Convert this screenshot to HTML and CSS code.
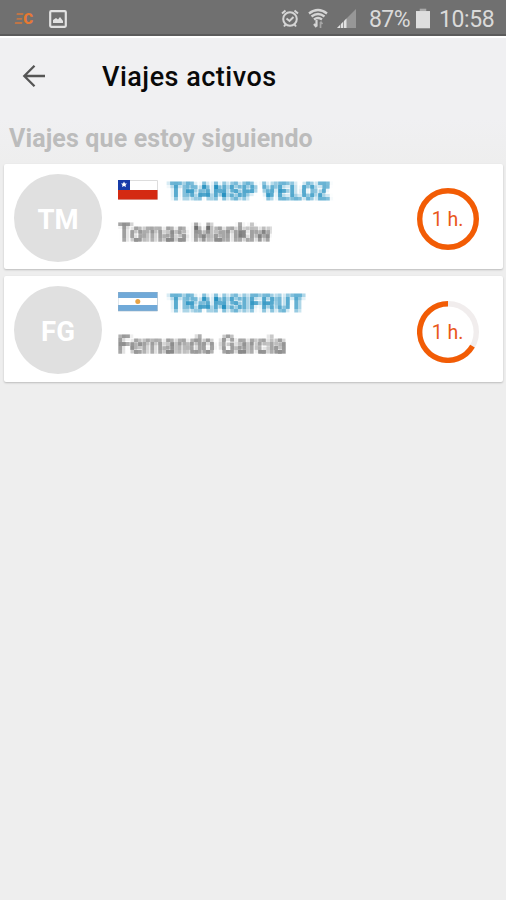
FILE: index.html
```html
<!DOCTYPE html>
<html lang="es">
<head>
<meta charset="utf-8">
<title>Viajes activos</title>
<link rel="stylesheet" href="styles.css">
</head>
<body>
<svg class="defs" width="0" height="0" aria-hidden="true">
  <filter id="mosaic" x="0" y="0" width="100%" height="100%" color-interpolation-filters="sRGB">
    <feGaussianBlur in="SourceGraphic" stdDeviation="1.5 1.1" result="soft"/>
    <feFlood x="1" y="1" width="2" height="2" flood-color="#000"/>
    <feComposite width="4" height="4"/>
    <feTile result="grid"/>
    <feComposite in="soft" in2="grid" operator="in"/>
    <feMorphology operator="dilate" radius="1"/>
    <feGaussianBlur stdDeviation="0.5"/>
  </filter>
</svg>
<header class="status">
  <span class="brand"><i>Ξ</i>C</span>
  <svg class="picture" width="18" height="18" viewBox="0 0 18 18"><rect x="1.2" y="1.2" width="15.6" height="15.6" rx="1" fill="none" stroke="#e2e2e2" stroke-width="2.2"/><path d="M4 13V10l3-2 2 1.500 2-2.500 3 4v2z" fill="#e2e2e2"/></svg>
  <svg class="alarm" width="18" height="19" viewBox="0 0 18 19" fill="none" stroke="#d5d5d5" stroke-width="2"><circle cx="9" cy="10" r="6.800"/><path d="M1 4.500 4.500 1.500M17 4.500 13.500 1.500M5.500 9.500 8.500 12l4-4M4.500 15.500 3 17.500M13.500 15.500 15 17.500"/></svg>
  <svg class="wifi" width="20" height="21" viewBox="0 0 20 21" fill="none" stroke="#d5d5d5" stroke-width="2.300"><path d="M1 5.500Q10-1.500 19 5.500M3.500 8.500Q10 3.500 16.500 8.500M6 11.500Q10 8.500 14 11.500"/><path d="M8.500 12v6.500M6 16l2.500 3" stroke-width="2.200"/><path d="M12.500 20v-6M14.500 16l-2-2.500" stroke="#a5a5a5" stroke-width="1.700"/></svg>
  <svg class="signal" width="19" height="19" viewBox="0 0 19 19"><path d="M0 19 19 0V19z" fill="#979797"/><path d="M0 19l3-3v3zM4 19v-4l2-2v6zM7 19v-7l2.500-2.500V19z" fill="#e2e2e2"/></svg>
  <span class="percent">87%</span>
  <svg class="battery" width="14" height="21" viewBox="0 0 15 21"><path d="M4 0h7v3H4z" fill="#aaa"/><path d="M0 2.500h15V21H0z" fill="#dedede"/></svg>
  <span class="clock">10:58</span>
</header>
<nav class="appbar">
  <svg width="24" height="24" viewBox="0 0 24 24" fill="none" stroke="#555" stroke-width="2.300"><path d="M23 12H2M12.500 1.800 2.300 12l10.200 10.200"/></svg>
  <h1>Viajes activos</h1>
</nav>
<main>
  <h2>Viajes que estoy siguiendo</h2>
  <article class="card">
    <div class="avatar">TM</div>
    <div class="info">
      <div class="company">
        <svg width="40" height="20" viewBox="0 0 40 20"><path d="M.5.500h39v19H.5z" fill="#fff" stroke="#ddd"/><path d="M0 10h39.500v9.500H0z" fill="#d42a12"/><path d="M0 0h12v10H0z" fill="#173ba8"/><path d="m6 1.500 1 2h2L7.500 5 8 7 6 6 4 7l.5-2L3 3.500h2z" fill="#fff"/></svg>
        <span class="masked veloz">TRANSP VELOZ</span>
      </div>
      <div class="masked person tomas">Tomas Mankiw</div>
    </div>
    <div class="progress">
      <svg width="62" height="62" viewBox="0 0 62 62"><circle cx="31" cy="31" r="28.300" class="arc"/></svg>
      <span>1 h.</span>
    </div>
  </article>
  <article class="card second">
    <div class="avatar">FG</div>
    <div class="info">
      <div class="company">
        <svg width="40" height="20" viewBox="0 0 40 20"><path d="M0 0h39.500v19H0z" fill="#fff"/><path d="M0 0h39.500v6H0zM0 13h39.500v6H0z" fill="#70a9d8"/><path d="M0 0h39.500v19H0z" fill="none" stroke="#9bb3c8" stroke-width=".6"/><circle cx="19.800" cy="9.500" r="2.500" fill="#e9a344"/></svg>
        <span class="masked frut">TRANSIFRUT</span>
      </div>
      <div class="masked person fernando">Fernando Garcia</div>
    </div>
    <div class="progress">
      <svg width="62" height="62" viewBox="0 0 62 62"><circle cx="31" cy="31" r="28.300" class="track"/><path class="arc" d="M31 2.700A28.300 28.300 0 1 0 55.500 45.150"/></svg>
      <span>1 h.</span>
    </div>
  </article>
</main>
</body>
</html>
```
FILE: styles.css
```css
* { box-sizing: border-box; }
body {
  margin: 0;
  height: 900px;
  overflow: hidden;
  background: #eee;
  font-family: Roboto, "Liberation Sans", sans-serif;
}
.defs { position: absolute; }
.status {
  display: flex;
  align-items: center;
  height: 36px;
  padding: 3px 11px 0 15px;
  background: #707070;
  border-bottom: 2px solid #5b5b5b;
  color: #dadada;
  font-size: 23px;
}
.status svg { flex: none; }
.status .percent, .status .clock { padding-top: 2px; }
.brand {
  width: 34px;
  color: #e87932;
  font-size: 15px;
  font-weight: 900;
  white-space: nowrap;
}
.brand i { opacity: .65; }
.alarm { margin-left: auto; }
.wifi { margin-left: 9px; }
.signal { margin-left: 9px; }
.percent { width: 42px; margin-left: 13px; letter-spacing: -.6px; }
.battery { margin-left: 5px; }
.clock { width: 56px; margin-left: 9px; letter-spacing: -.4px; }
.appbar {
  display: flex;
  align-items: center;
  height: 83px;
  padding: 0 22px 6px;
  background: #f0f0f2;
  border-top: 2px solid #fff;
}
h1 {
  margin: 3px 0 0 56px;
  color: #090909;
  font-size: 27px;
  font-weight: 500;
  line-height: 36px;
  letter-spacing: .5px;
}
h2 {
  height: 45px;
  margin: 0;
  padding: 4px 9px 0;
  background: linear-gradient(#f0f0f2, #eee);
  color: #bcbcbc;
  font-size: 25px;
  font-weight: 700;
  line-height: 32px;
  letter-spacing: .13px;
  white-space: nowrap;
}
.card {
  display: flex;
  height: 105px;
  margin: 0 3px 0 4px;
  padding: 10px 24px 0 10px;
  background: #fff;
  border-radius: 2px;
  box-shadow: 0 1px 2px #bbb;
}
.second { height: 106px; margin-top: 7px; }
.avatar {
  display: grid;
  place-items: center;
  width: 88px;
  height: 88px;
  padding-top: 3px;
  border-radius: 50%;
  background: #e0e0e0;
  color: #fff;
  font-size: 27.5px;
  font-weight: 700;
}
.info { flex: 1; margin-left: 16px; padding-top: 5px; }
.company { display: flex; align-items: center; height: 22px; }
.masked { filter: url(#mosaic); white-space: nowrap; }
.company .masked {
  height: 26px;
  margin-left: 8px;
  padding: 2px 3px 0;
  color: #1689bc;
  font-size: 22px;
  font-weight: 700;
  line-height: 26px;
  letter-spacing: .3px;
}
.person {
  width: max-content;
  height: 30px;
  margin-top: 17px;
  padding-top: 1px;
  color: #444;
  font-size: 23px;
  line-height: 30px;
}
.tomas { letter-spacing: -.2px; }
.progress {
  display: grid;
  place-items: center;
  width: 62px;
  height: 62px;
  margin-top: 14px;
}
.second .progress { margin-top: 15px; }
.progress > * { grid-area: 1 / 1; }
.progress span { padding-right: 1px; color: #e9581b; font-size: 19.5px; }
.arc { fill: none; stroke: #f25c05; stroke-width: 5.4; }
.track { fill: none; stroke: #f1eded; stroke-width: 5.4; }
```
